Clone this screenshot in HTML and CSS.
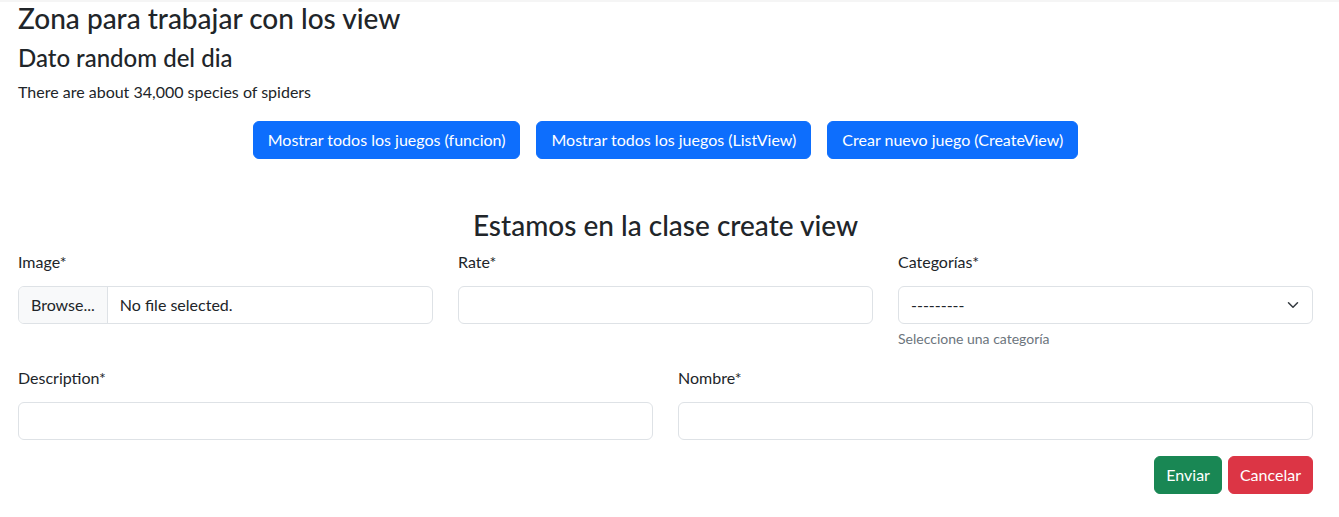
FILE: index.html
```html
<!DOCTYPE html>
<html lang="es">
<head>
<meta charset="utf-8">
<title>Views</title>
<link rel="stylesheet" href="styles.css">
</head>
<body>
<div class="topbar"></div>
<main class="container">
  <h3 class="title">Zona para trabajar con los view</h3>
  <h4 class="subtitle">Dato random del dia</h4>
  <p class="fact">There are about 34,000 species of spiders</p>
  <div class="nav-buttons">
    <a class="btn btn-primary" href="#">Mostrar todos los juegos (funcion)</a>
    <a class="btn btn-primary" href="#">Mostrar todos los juegos (ListView)</a>
    <a class="btn btn-primary" href="#">Crear nuevo juego (CreateView)</a>
  </div>
  <h3 class="section-title">Estamos en la clase create view</h3>
  <form class="form">
    <div class="row row-3">
      <div class="field">
        <label class="form-label">Image*</label>
        <div class="file-input">
          <span class="file-btn">Browse...</span>
          <span class="file-name">No file selected.</span>
        </div>
      </div>
      <div class="field">
        <label class="form-label">Rate*</label>
        <input class="form-control" type="text">
      </div>
      <div class="field">
        <label class="form-label">Categorías*</label>
        <div class="select-wrap">
          <select class="form-select"><option>---------</option></select>
          <svg class="chevron" viewBox="0 0 16 16" width="16" height="12"><path fill="none" stroke="#343a40" stroke-linecap="round" stroke-linejoin="round" stroke-width="2" d="m2 5 6 6 6-6"/></svg>
        </div>
        <div class="form-text">Seleccione una categoría</div>
      </div>
    </div>
    <div class="row row-2">
      <div class="field">
        <label class="form-label">Description*</label>
        <input class="form-control" type="text">
      </div>
      <div class="field">
        <label class="form-label">Nombre*</label>
        <input class="form-control" type="text">
      </div>
    </div>
    <div class="actions">
      <button type="button" class="btn btn-success btn-form">Enviar</button>
      <button type="button" class="btn btn-danger btn-form">Cancelar</button>
    </div>
  </form>
</main>
</body>
</html>
```
FILE: styles.css
```css
* { box-sizing: border-box; }
html, body { margin: 0; padding: 0; }
body {
  font-family: Lato, "Noto Sans", "Liberation Sans", sans-serif;
  font-size: 16px;
  line-height: 1.5;
  color: #212529;
  background: #fff;
}
.topbar { height: 2px; background: #f5f5f5; }
.container { padding: 0 26px 0 18px; }
h3, h4 { font-weight: 500; line-height: 1.2; margin: 0 0 8px; }
.title { font-size: 28px; }
.subtitle { font-size: 24px; }
.fact { margin: 0 0 17px; }
.nav-buttons { display: flex; justify-content: center; gap: 16px; }
.btn {
  display: inline-block;
  padding: 6px 14px;
  font-size: 16px;
  line-height: 24px;
  border: 1px solid transparent;
  border-radius: 6px;
  color: #fff;
  text-decoration: none;
  font-family: inherit;
  cursor: pointer;
}
.btn-form { padding: 6px 11px; }
.btn-primary { background: #0d6efd; border-color: #0d6efd; }
.btn-success { background: #198754; border-color: #198754; }
.btn-danger { background: #dc3545; border-color: #dc3545; }
.section-title { font-size: 28px; text-align: center; margin: 50px 0 7px; }
.row { display: grid; gap: 25px; margin-bottom: 16px; }
.row-3 { grid-template-columns: repeat(3, 1fr); margin-bottom: 17px; }
.row-2 { grid-template-columns: repeat(2, 1fr); }
.form-label { display: block; margin-bottom: 12px; }
.form-control, .form-select, .file-input {
  display: block;
  width: 100%;
  height: 38px;
  border: 1px solid #dee2e6;
  border-radius: 6px;
  background: #fff;
  font-family: inherit;
  font-size: 16px;
  color: #212529;
}
.form-control { padding: 6px 12px; }
.file-input { display: flex; overflow: hidden; }
.file-btn {
  background: #f8f9fa;
  border-right: 1px solid #dee2e6;
  padding: 6px 12px;
  line-height: 24px;
}
.file-name { padding: 6px 12px; line-height: 24px; }
.select-wrap { position: relative; }
.form-select { appearance: none; -webkit-appearance: none; padding: 6px 36px 6px 12px; }
.chevron { position: absolute; right: 12px; top: 13px; pointer-events: none; }
.form-text { margin-top: 4px; font-size: 14px; line-height: 21px; color: #6c757d; }
.actions { display: flex; justify-content: flex-end; gap: 6px; }
```
